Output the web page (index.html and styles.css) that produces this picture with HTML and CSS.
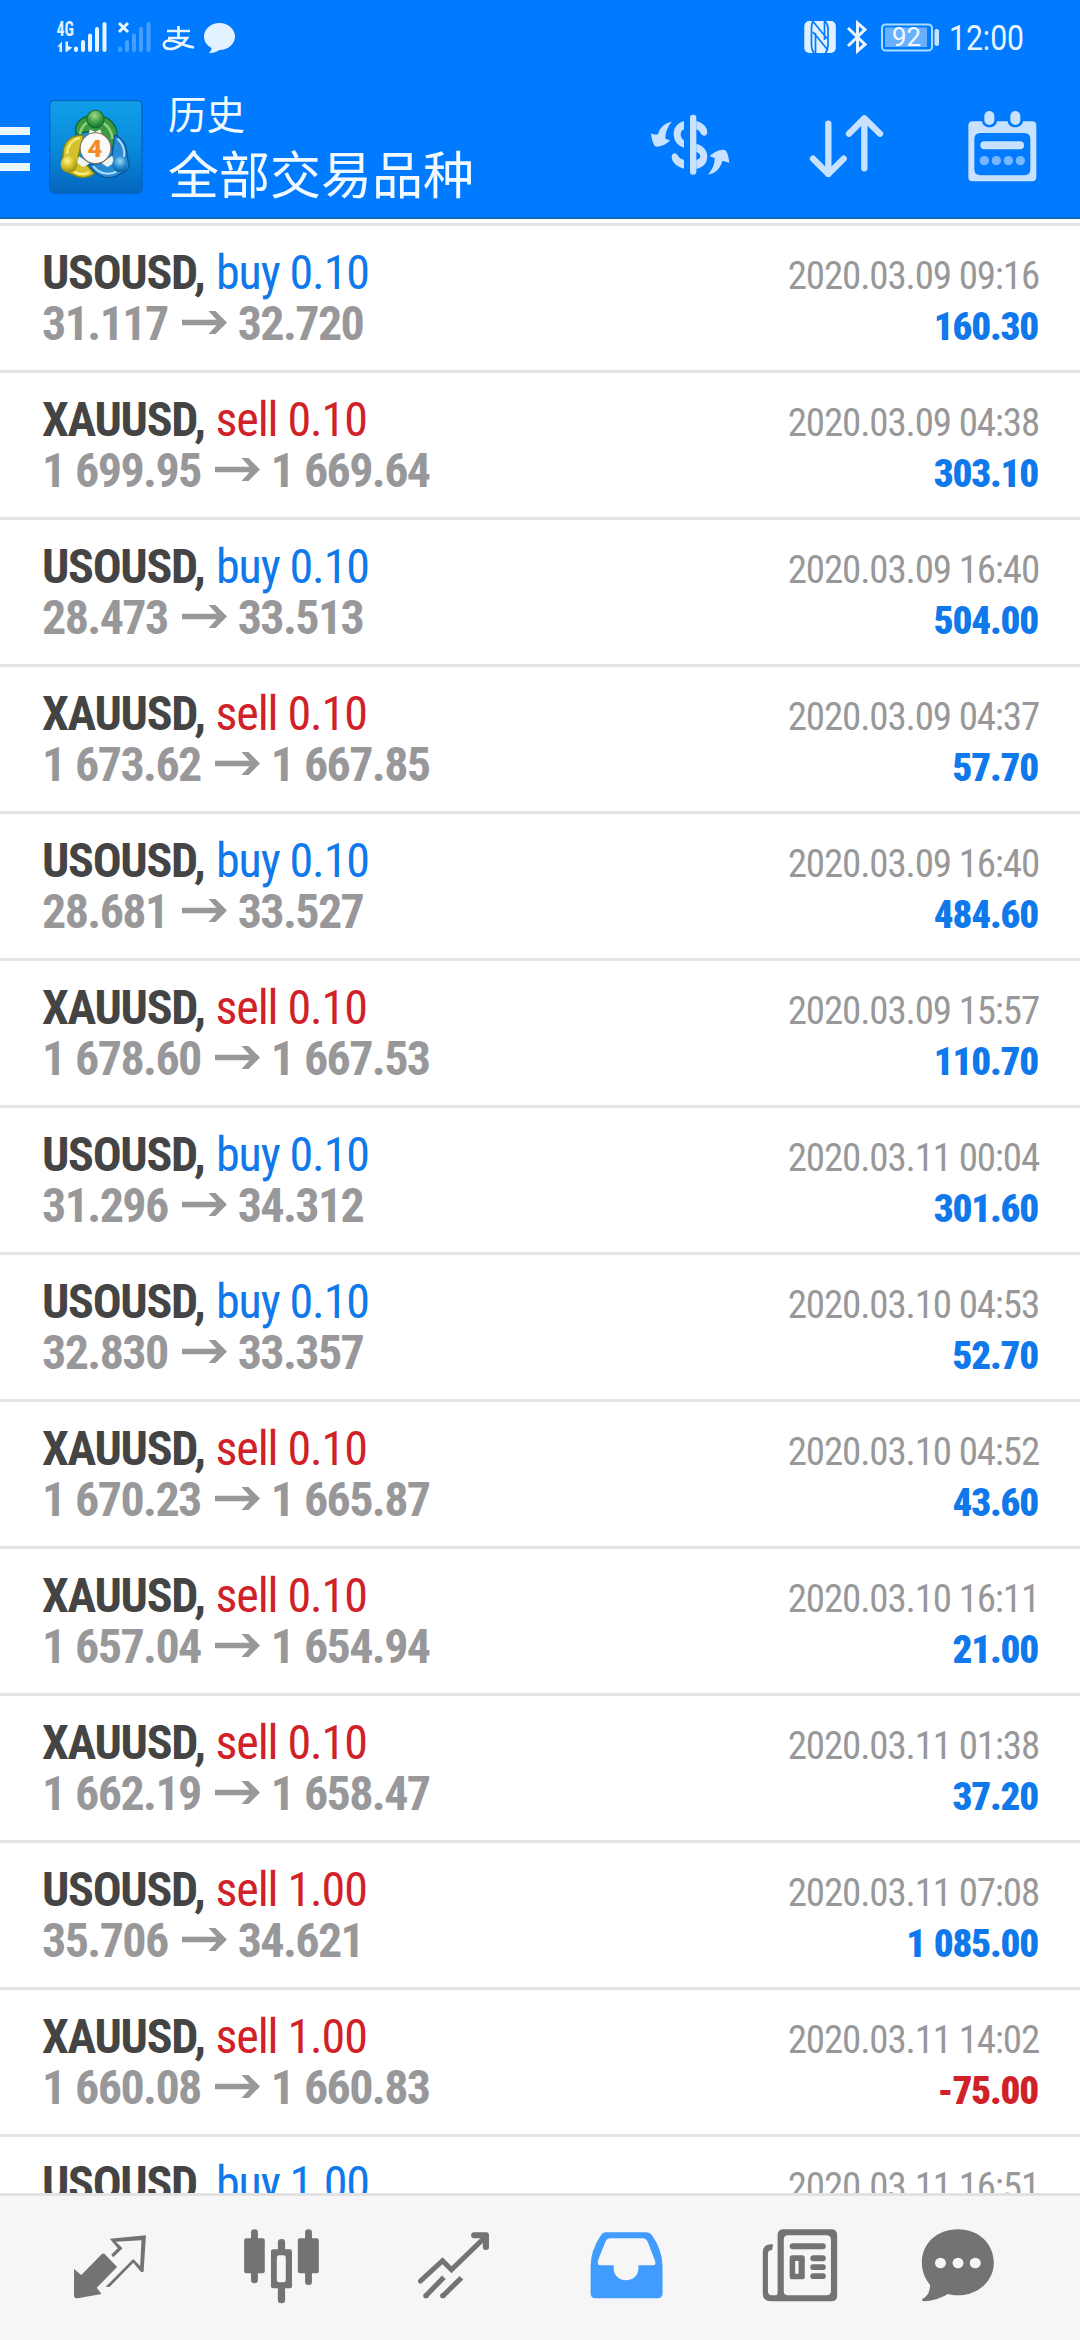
FILE: index.html
```html
<!DOCTYPE html>
<html lang="zh-CN">
<head>
<meta charset="utf-8">
<title>历史</title>
<link rel="stylesheet" href="styles.css">
</head>
<body>
<svg class="defs" aria-hidden="true">
  <symbol id="arrow" viewBox="0 0 45 26"><path d="M0 10.2H34.5L26.5 1.5H33.5L45 13L33.5 24.5H26.5L34.5 15.8H0Z" fill="#98989a"/></symbol>
</svg>
<header class="top">
  <div class="status">
    <svg class="status-left" viewBox="50 15 190 45">
      <text class="net" x="56.500" y="36" textLength="17.500" lengthAdjust="spacingAndGlyphs">4G</text>
      <path d="M57 47L62 41.500V52H59.500V46.500ZM65.500 41.500H68V46L72.500 47.500L66.500 52H65.500Z" fill="#e0f0ff"/>
      <g stroke="#e8f5ff" stroke-width="4" stroke-linecap="round"><path d="M76 48.500V50M83 42V50M90 35.500V50M97 29V50M104.500 24V50"/>
      <path opacity=".3" d="M120 48.500V50M127 42V50M134 35.500V50M141 29V50M148.500 24V50"/></g>
      <path d="M119 23L128 32M128 23L119 32" stroke="#e8f5ff" stroke-width="3"/>
      <path d="M167 31H190M178.500 26V38M168 38H187C184 43 177 49 170 49C162 49 162 41 169 40.500C177 40.500 183 46 194 47.500" fill="none" stroke="#e8f5ff" stroke-width="2.700"/>
      <path d="M219.500 23C228 23 235 29 235 36.500C235 44 228 50 219.500 50C216 52.500 212 53 209 53C211 51 211.500 49.500 211.500 48C207 45.500 204 41.500 204 36.500C204 29 211 23 219.500 23Z" fill="#e4f1ff"/>
    </svg>
    <svg class="status-right" viewBox="800 15 230 45">
      <rect x="804.300" y="21" width="31.500" height="32" rx="5" fill="#e0f0ff"/>
      <path d="M813.500 20.500C811.500 23 811.500 26 811.500 29V46C811.500 49 812.500 51 814 53.500M824.500 20.500C827 23 828 25 828 28V45C828 49 827 51 825.500 53.500M815.500 33V53M824.500 21V40M813 21.500L827 38.500M813 32L827 49" fill="none" stroke="#007aff" stroke-width="1.700"/>
      <path d="M848 28L865 44.500L857.500 51V23L865 29.500L848 46" fill="none" stroke="#e8f5ff" stroke-width="3"/>
      <rect x="882" y="24.500" width="50" height="26" rx="3.500" fill="none" stroke="#a8dcff" stroke-width="2"/>
      <rect x="885" y="27.500" width="42" height="19.500" fill="#69b0ff"/>
      <rect x="934.500" y="29" width="4.500" height="17" rx="2" fill="#c4e5ff"/>
      <text class="battery" x="892" y="46" textLength="29" lengthAdjust="spacingAndGlyphs">92</text>
      <text class="clock" x="949" y="50" textLength="75" lengthAdjust="spacingAndGlyphs">12:00</text>
    </svg>
  </div>
  <div class="appbar">
    <div class="menu"><i></i><i></i><i></i></div>
    <svg class="logo" viewBox="148 300 281 281">
      <defs>
        <linearGradient id="bg" x1="0" y1="0" x2="0" y2="1"><stop offset="0" stop-color="#109fe8"/><stop offset=".5" stop-color="#0a8bda"/><stop offset="1" stop-color="#0466be"/></linearGradient>
        <radialGradient id="gr" cx=".45" cy=".3" r=".7"><stop offset="0" stop-color="#a5d989"/><stop offset=".6" stop-color="#399c42"/><stop offset="1" stop-color="#187334"/></radialGradient>
        <radialGradient id="ye" cx=".4" cy=".3" r=".8"><stop offset="0" stop-color="#fff48a"/><stop offset=".5" stop-color="#d2bd26"/><stop offset="1" stop-color="#827b11"/></radialGradient>
        <radialGradient id="bl" cx=".5" cy=".3" r=".7"><stop offset="0" stop-color="#9ed9f7"/><stop offset=".6" stop-color="#258bd2"/><stop offset="1" stop-color="#075b9e"/></radialGradient>
      </defs>
      <rect x="150" y="302" width="276" height="276" rx="12" fill="url(#bg)" stroke="#0762bb" stroke-width="4"/>
      <path d="M228 402C222 370 245 348 274 348H300C335 350 357 385 350 419C347 435 338 443 325 448L300 395H260Z" fill="#3b9b42" stroke="#0d6336" stroke-width="4"/>
      <path d="M240 402C248 368 268 362 287 362C312 362 335 385 338 417" fill="none" stroke="#8fcc74" stroke-width="8"/>
      <path d="M251 406C211 402 188 431 190 465L185 500C190 518 216 518 228 527C250 537 274 529 284 519L254 487L235 470Z" fill="#d3c02c" stroke="#77851b" stroke-width="4"/>
      <path d="M240 414C216 418 202 440 202 462M222 514C242 524 258 522 268 515" fill="none" stroke="#f6ec7c" stroke-width="7"/>
      <path d="M344 406C366 412 382 435 381 467L388 493C386 517 364 516 352 527C319 541 286 525 266 493L322 487L337 465Z" fill="#2a8bd2" stroke="#07579a" stroke-width="4"/>
      <path d="M353 415C370 433 376 453 372 470M280 498C298 521 325 526 350 514" fill="none" stroke="#a9dcff" stroke-width="6"/>
      <path d="M270 388L286 395L302 388L306 405H266ZM238 468L232 488L250 500L270 490ZM337 466L342 488L323 500L305 489Z" fill="#e9f6ed"/>
      <circle cx="287" cy="357" r="26" fill="url(#gr)" stroke="#176736" stroke-width="3"/><circle cx="208" cy="492" r="25" fill="url(#ye)"/><circle cx="360" cy="492" r="23" fill="url(#bl)"/>
      <circle cx="287" cy="444" r="46" fill="#fafafa" stroke="#826b55" stroke-width="3"/>
      <text class="four" x="262" y="469" textLength="46" lengthAdjust="spacingAndGlyphs">4</text>
    </svg>
    <div class="titles"><div class="title">历史</div><div class="subtitle">全部交易品种</div></div>
    <div class="actions">
      <svg class="ic-currency" viewBox="90 70 240 190" fill="#c8e1ff">
        <path d="M155 96C132 101 119 114 114 134C107 136 99 134 93 131C94 146 98 160 104 169C110 172 115 172 119 170C130 167 142 163 150 152C145 150 140 149 136 147C136 129 142 112 155 96ZM264 255C279 237 284 222 284 205C279 204 274 201 269 199C280 188 293 182 307 180C312 180 316 181 319 185C324 194 327 207 328 220C321 217 314 214 307 214C301 236 288 251 264 255Z"/>
        <path d="M192 95V119C180 123 178 143 192 152V174C173 169 161 153 161 133C161 113 174 98 192 95ZM192 210V237C170 231 155 217 155 202C155 189 168 187 173 197C177 205 183 209 192 210ZM229 94C248 99 262 112 262 127C262 142 246 141 242 131C239 124 235 121 229 119ZM229 162C251 169 262 182 262 200C262 221 249 234 229 238V211C245 207 245 193 229 187Z"/>
        <rect x="210" y="75" width="19" height="180" rx="9"/>
      </svg>
      <svg class="ic-sort" viewBox="560 70 240 200" fill="none" stroke="#c8e1ff" stroke-width="19" stroke-linecap="round" stroke-linejoin="round"><path d="M624 102V253M578 207L624 253L670 207M732 236V86M686 132L732 86L779 132"/></svg>
      <svg class="ic-cal" viewBox="1040 56 212 220" fill="#c8e1ff">
        <path fill-rule="evenodd" d="M1058 93H1085C1088 117 1127 117 1130 93H1162C1165 117 1205 117 1208 93H1235Q1248 93 1248 106V260Q1248 273 1235 273H1056Q1044 273 1044 260V106Q1044 93 1058 93ZM1080 128Q1062 128 1062 146V237Q1062 255 1080 255H1212Q1230 255 1230 237V146Q1230 128 1212 128Z"/>
        <rect x="1092" y="62" width="30" height="42" rx="15"/><rect x="1170" y="62" width="30" height="42" rx="15"/><rect x="1080" y="153" width="131" height="24" rx="12"/>
        <g opacity=".6"><circle cx="1092" cy="211" r="14"/><circle cx="1128" cy="211" r="14"/><circle cx="1164" cy="211" r="14"/><circle cx="1200" cy="211" r="14"/></g>
      </svg>
    </div>
  </div>
</header>
<main class="list">
  <article class="deal"><div class="line"><b>USOUSD,</b><span class="buy">buy 0.10</span><time>2020.03.09 09:16</time></div><div class="line prices"><span>31.117</span><svg><use href="#arrow"/></svg><span>32.720</span><strong>160.30</strong></div></article>
  <article class="deal"><div class="line"><b>XAUUSD,</b><span class="sell">sell 0.10</span><time>2020.03.09 04:38</time></div><div class="line prices"><span>1 699.95</span><svg><use href="#arrow"/></svg><span>1 669.64</span><strong>303.10</strong></div></article>
  <article class="deal"><div class="line"><b>USOUSD,</b><span class="buy">buy 0.10</span><time>2020.03.09 16:40</time></div><div class="line prices"><span>28.473</span><svg><use href="#arrow"/></svg><span>33.513</span><strong>504.00</strong></div></article>
  <article class="deal"><div class="line"><b>XAUUSD,</b><span class="sell">sell 0.10</span><time>2020.03.09 04:37</time></div><div class="line prices"><span>1 673.62</span><svg><use href="#arrow"/></svg><span>1 667.85</span><strong>57.70</strong></div></article>
  <article class="deal"><div class="line"><b>USOUSD,</b><span class="buy">buy 0.10</span><time>2020.03.09 16:40</time></div><div class="line prices"><span>28.681</span><svg><use href="#arrow"/></svg><span>33.527</span><strong>484.60</strong></div></article>
  <article class="deal"><div class="line"><b>XAUUSD,</b><span class="sell">sell 0.10</span><time>2020.03.09 15:57</time></div><div class="line prices"><span>1 678.60</span><svg><use href="#arrow"/></svg><span>1 667.53</span><strong>110.70</strong></div></article>
  <article class="deal"><div class="line"><b>USOUSD,</b><span class="buy">buy 0.10</span><time>2020.03.11 00:04</time></div><div class="line prices"><span>31.296</span><svg><use href="#arrow"/></svg><span>34.312</span><strong>301.60</strong></div></article>
  <article class="deal"><div class="line"><b>USOUSD,</b><span class="buy">buy 0.10</span><time>2020.03.10 04:53</time></div><div class="line prices"><span>32.830</span><svg><use href="#arrow"/></svg><span>33.357</span><strong>52.70</strong></div></article>
  <article class="deal"><div class="line"><b>XAUUSD,</b><span class="sell">sell 0.10</span><time>2020.03.10 04:52</time></div><div class="line prices"><span>1 670.23</span><svg><use href="#arrow"/></svg><span>1 665.87</span><strong>43.60</strong></div></article>
  <article class="deal"><div class="line"><b>XAUUSD,</b><span class="sell">sell 0.10</span><time>2020.03.10 16:11</time></div><div class="line prices"><span>1 657.04</span><svg><use href="#arrow"/></svg><span>1 654.94</span><strong>21.00</strong></div></article>
  <article class="deal"><div class="line"><b>XAUUSD,</b><span class="sell">sell 0.10</span><time>2020.03.11 01:38</time></div><div class="line prices"><span>1 662.19</span><svg><use href="#arrow"/></svg><span>1 658.47</span><strong>37.20</strong></div></article>
  <article class="deal"><div class="line"><b>USOUSD,</b><span class="sell">sell 1.00</span><time>2020.03.11 07:08</time></div><div class="line prices"><span>35.706</span><svg><use href="#arrow"/></svg><span>34.621</span><strong>1 085.00</strong></div></article>
  <article class="deal"><div class="line"><b>XAUUSD,</b><span class="sell">sell 1.00</span><time>2020.03.11 14:02</time></div><div class="line prices"><span>1 660.08</span><svg><use href="#arrow"/></svg><span>1 660.83</span><strong class="loss">-75.00</strong></div></article>
  <article class="deal"><div class="line"><b>USOUSD,</b><span class="buy">buy 1.00</span><time>2020.03.11 16:51</time></div></article>
</main>
<nav class="tabs">
  <svg preserveAspectRatio="none" viewBox="197.500 314 244 244"><path d="M215 446L236 464L296 401Q300 398 304 401L340 440L281 502L295 521L226 534Q215 535 215 524Z"/><path fill-rule="evenodd" d="M319 355L424 345L417 455L410 455L387 427L318 500L307 499L387 416L407 437L411 360L336 364L356 384L329 411L323 403L342 384Z"/></svg>
  <svg preserveAspectRatio="none" viewBox="697 314 244 244"><rect x="729" y="327" width="20" height="162" rx="10"/><rect x="709" y="354" width="60" height="105" rx="6"/><rect x="886" y="327" width="20" height="167" rx="10"/><rect x="865" y="354" width="61" height="105" rx="6"/><rect x="807" y="356" width="21" height="193" rx="10"/><rect x="787" y="387" width="61" height="117" rx="6"/><rect x="804" y="405" width="26" height="81" rx="7" fill="#f6f6f6"/></svg>
  <svg preserveAspectRatio="none" viewBox="1196.400 314 244 244"><g fill="none" stroke="#737373" stroke-width="15" stroke-linejoin="miter"><path stroke-linecap="round" d="M1221 482L1285 421L1311 448L1410 349"/><path d="M1289 471L1237 526M1340 472L1286 527"/></g><circle cx="1237" cy="526" r="8"/><circle cx="1286" cy="526" r="8"/><path d="M1377 336H1412Q1420 336 1420 344V381Q1420 389 1411 389Q1402 389 1402 381V354H1377Q1368 354 1368 345Q1368 336 1377 336Z"/></svg>
  <svg preserveAspectRatio="none" viewBox="127.800 314 244 244"><path fill="#429bff" fill-rule="evenodd" d="M190 336H310Q319 336 325 344Q356 390 356 438V519Q356 534 341 534H161Q147 534 147 519V438Q147 390 176 346Q182 336 190 336ZM205 354Q195 354 190 364L169 419Q164 435 178 435H214V445C216 491 284 491 286 445V435H327Q339 435 334 421L314 367Q309 354 297 354Z"/></svg>
  <svg preserveAspectRatio="none" viewBox="627.300 314 244 244"><path fill-rule="evenodd" d="M708 327H846Q863 327 863 344V526Q863 543 846 543H670Q647 543 647 519V397Q647 372 672 372H677L674 389Q662 389 662 400V512Q662 525 674 525H682Q690 525 690 517V344Q690 327 708 327ZM720 345Q708 345 708 358V513Q708 525 720 525H831Q845 525 845 513V358Q845 345 831 345Z"/><rect x="725" y="369" width="105" height="18" rx="9"/><path fill-rule="evenodd" d="M733 405H761Q769 405 769 413V469Q769 477 761 477H733Q725 477 725 469V413Q725 405 733 405ZM741 422V460H751V422Z"/><rect x="785" y="405" width="45" height="18" rx="9"/><rect x="785" y="432" width="45" height="17" rx="8.500"/><rect x="785" y="459" width="45" height="17" rx="8.500"/></svg>
  <svg preserveAspectRatio="none" viewBox="1091.900 314 244 244"><path d="M1214 327C1276 327 1318 372 1318 427C1318 482 1272 525 1214 525C1202 525 1192 523 1184 521C1162 535 1137 542 1116 543Q1107 542 1110 536C1128 528 1132 510 1133 494C1118 475 1109 454 1109 426C1109 371 1152 327 1214 327Z"/><circle cx="1163" cy="428" r="16" fill="#f6f6f6"/><circle cx="1214" cy="428" r="16" fill="#f6f6f6"/><circle cx="1264" cy="428" r="16" fill="#f6f6f6"/></svg>
</nav>
</body>
</html>
```
FILE: styles.css
```css
* { box-sizing: border-box; }
body {
  margin: 0;
  width: 1080px;
  height: 2340px;
  display: flex;
  flex-direction: column;
  overflow: hidden;
  background: #fff;
  font-family: "Roboto Condensed", Roboto, "Noto Sans CJK SC", sans-serif;
}
.defs { display: none; }

.top {
  flex: none;
  height: 219px;
  background: #007aff;
  border-bottom: 2px solid #1068c0;
}
.status {
  height: 75px;
  display: flex;
  justify-content: space-between;
  padding: 15px 50px 15px 50px;
}
.status svg { overflow: visible; }
.status-left { width: 190px; height: 45px; }
.status-right { width: 230px; height: 45px; }
.net { font: 700 20px "Roboto Condensed", sans-serif; fill: #e0f0ff; }
.battery { font: 400 25px Roboto, sans-serif; fill: #f2faff; }
.clock { font: 400 35px Roboto, sans-serif; fill: #e8f5ff; }

.appbar {
  height: 142px;
  display: flex;
  align-items: flex-start;
}
.menu {
  width: 30px;
  margin-top: 52px;
  display: grid;
  gap: 10px;
}
.menu i { height: 8px; background: #ebf7ff; }
.logo { width: 94px; height: 94px; margin: 25px 0 0 19px; }
.four { font: 700 70px "Roboto Condensed", sans-serif; fill: #f58a24; }
.titles {
  margin: 10px 0 0 25px;
  color: #f2faff;
  font-family: "Noto Sans CJK SC", sans-serif;
}
.title { font-size: 38.500px; line-height: 54px; }
.subtitle { font-size: 51px; line-height: 66px; }
.actions {
  flex: 1;
  display: flex;
  align-items: flex-start;
  justify-content: flex-end;
  padding: 34px 42.500px 0 0;
}
.ic-currency { width: 80px; height: 63.300px; margin: 4px 77px 0 0; }
.ic-sort { width: 80px; height: 66.700px; margin: 4px 80px 0 0; }
.ic-cal { width: 70.700px; height: 73.300px; }

.list {
  flex: none;
  height: 1974px;
  padding-top: 4px;
  overflow: hidden;
}
.deal {
  height: 147px;
  border-top: 3px solid #e4e4e4;
  padding: 21px 42px 0;
}
.line {
  height: 51px;
  display: flex;
  align-items: baseline;
  line-height: 51px;
  font-size: 48px;
  white-space: nowrap;
}
.line b { width: 174px; color: #444; letter-spacing: -1.300px; }
.buy, .sell { letter-spacing: -1.100px; }
.buy { color: #0f78ea; }
.sell { color: #d12128; margin-left: -0.500px; }
time, strong { margin-left: auto; font-size: 39px; }
time { color: #98989a; letter-spacing: -1.150px; margin-right: -1px; }
.prices { color: #98989a; font-weight: 700; letter-spacing: -1.600px; word-spacing: 1px; }
.prices svg { width: 45px; height: 26px; margin: 0 11px 0 14px; transform: translateY(-1.500px); align-self: center; }
strong { color: #0f78ea; letter-spacing: -1.200px; }
.loss { color: #d12128; }

.tabs {
  flex: 1;
  display: flex;
  gap: 88px;
  padding: 28.700px 0 0 68px;
  background: #f6f6f6;
  border-top: 3px solid #e2e2e4;
}
.tabs svg { flex: none; width: 84px; height: 81.300px; fill: #737373; }
.tabs svg:last-child { margin-left: -12px; }
```
